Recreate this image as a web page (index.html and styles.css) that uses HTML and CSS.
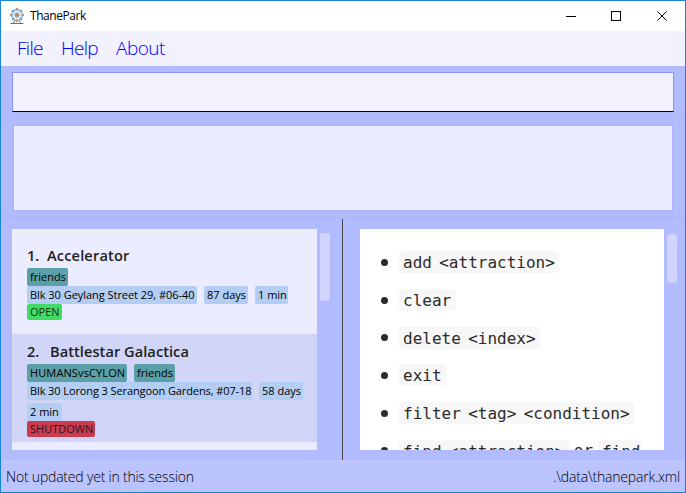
FILE: index.html
```html
<!DOCTYPE html>
<html lang="en">
<head>
<meta charset="utf-8">
<title>ThanePark</title>
<link rel="stylesheet" href="styles.css">
</head>
<body>
<div class="window">
  <header class="titlebar">
    <svg class="app-icon" width="16" height="16" viewBox="0 0 16 16">
      <path d="M7.5 7.5 4.5 15M8.500 7.500 11.500 15" stroke="#68737a" fill="none"/>
      <path d="M1.500 15.500h13" stroke="#756b67"/>
      <circle cx="8" cy="7" r="5.500" fill="#e8f3fa" stroke="#72b4dc" stroke-width="1.300"/>
      <path d="M8 1.500v11M2.500 7h11M4 3l8 8M12 3l-8 8" stroke="#86b4cf" stroke-width=".8"/>
      <circle cx="8" cy="7" r="2" fill="#b8865c"/>
      <g fill="#e08b4c"><rect x="7" y="0" width="2" height="2"/><rect x="1" y="6" width="2" height="2"/><rect x="13" y="6" width="2" height="2"/><rect x="7" y="12" width="2" height="2"/></g>
      <g fill="#5b9fd0"><rect x="3" y="2" width="2" height="2"/><rect x="11" y="2" width="2" height="2"/><rect x="3" y="10" width="2" height="2"/><rect x="11" y="10" width="2" height="2"/></g>
    </svg>
    <span class="title">ThanePark</span>
    <svg class="controls" width="104" height="12" viewBox="0 0 104 12" fill="none" stroke="#000" shape-rendering="crispEdges">
      <path d="M0 6.500h10M45.500 1.500h9v9h-9z"/>
      <path d="M91.500 1.500l9 9M100.500 1.500l-9 9" shape-rendering="auto"/>
    </svg>
  </header>
  <nav class="menu"><span class="file">File</span><span class="help">Help</span><span class="about">About</span></nav>
  <section class="command"><div class="command-box"></div></section>
  <section class="result"><div class="result-box"></div></section>
  <main class="split">
    <section class="rides">
      <div class="ride-list">
        <article class="ride">
          <h2><span class="num">1.</span><span class="name-one">Accelerator</span></h2>
          <div class="row"><span class="tag w41">friends</span></div>
          <div class="row"><span class="cell w170">Blk 30 Geylang Street 29, #06-40</span><span class="cell w44">87 days</span><span class="cell w33">1 min</span></div>
          <div class="row"><span class="status open w35">OPEN</span></div>
        </article>
        <article class="ride alt">
          <h2><span class="num two">2.</span><span class="name-two">Battlestar Galactica</span></h2>
          <div class="row"><span class="tag w100">HUMANSvsCYLON</span><span class="tag w41">friends</span></div>
          <div class="row wrap"><span class="cell w225">Blk 30 Lorong 3 Serangoon Gardens, #07-18</span><span class="cell w44">58 days</span><span class="cell w35">2 min</span></div>
          <div class="row"><span class="status shut w68">SHUTDOWN</span></div>
        </article>
      </div>
      <div class="thumb ride-thumb"></div>
    </section>
    <div class="divider"></div>
    <section class="browser">
      <div class="help-page">
        <ul>
          <li><code>add &lt;attraction&gt;</code></li>
          <li><code>clear</code></li>
          <li><code>delete &lt;index&gt;</code></li>
          <li><code>exit</code></li>
          <li><code>filter &lt;tag&gt; &lt;condition&gt;</code></li>
          <li><code>find &lt;attraction&gt;</code><span class="or">or</span><code class="cut">find</code></li>
        </ul>
      </div>
      <div class="thumb page-thumb"></div>
    </section>
  </main>
  <footer class="status-bar"><span class="sync">Not updated yet in this session</span><span class="path">.\data\thanepark.xml</span></footer>
</div>
</body>
</html>
```
FILE: styles.css
```css
* { box-sizing: border-box; }
body { margin: 0; font-family: "Open Sans", "Noto Sans", sans-serif; }
.window { width: 686px; height: 493px; display: flex; flex-direction: column; border: 1px solid #1883d7; background: #b3bbff; overflow: hidden; white-space: nowrap; }
.titlebar { height: 30px; flex: none; display: flex; align-items: center; padding: 0 15px 0 8px; background: #fff; }
.title { margin: -1px 0 0 5px; font-size: 12px; letter-spacing: -.45px; color: #000; }
.controls { margin-left: auto; margin-top: -1px; }
.menu { height: 35px; flex: none; display: flex; align-items: center; padding: 0 0 1px 16px; background: #f2f2ff; color: #0000f5; font-size: 19px; font-weight: 300; }
.file { width: 44px; letter-spacing: -.7px; }
.help { width: 55px; letter-spacing: -.7px; }
.about { letter-spacing: -.5px; }
.command { height: 53px; flex: none; padding: 6px 11px 6px; border-bottom: 2px solid #aeb6fc; }
.command-box { height: 40px; border: 1px solid #8793ff; border-bottom-color: #000; background: #f2f2ff; }
.result { height: 99px; flex: none; padding: 5px 11px 6px; border-bottom: 1px solid #aab2f8; }
.result-box { height: 88px; border: 2px solid #adb5fb; background: #ebecff; }
.split { height: 242px; flex: none; display: flex; }
.rides { width: 341px; flex: none; display: flex; padding: 11px 0 10px 11px; }
.ride-list { width: 305px; height: 221px; overflow: hidden; background: #ebecff; }
.ride { height: 105px; padding: 16px 0 0 15px; color: #1d1d1d; }
.ride.alt { height: 108px; padding-top: 7px; background: #d1d5f7; }
h2 { display: flex; height: 23px; margin: 0; font-size: 14.600px; line-height: 20px; font-weight: 600; }
.num { width: 20px; }
.name-one { letter-spacing: .15px; }
.name-two { letter-spacing: .05px; }
.two { width: 23px; }
.row { display: flex; gap: 0 7px; font-size: 11px; }
.wrap { flex-wrap: wrap; row-gap: 3px; width: 282px; }
.row span { flex: none; height: 18px; padding-left: 3px; line-height: 18px; border-radius: 2px; background: #b3cdf3; color: #000; }
.row .tag { background: #5b9fa9; }
.row .status { height: 16px; line-height: 16px; }
.row .open { background: #3fdb65; color: #1a3320; }
.row .shut { background: #cb3c51; color: #2b1720; }
.w33 { width: 33px; } .w35 { width: 35px; } .w41 { width: 41px; } .w44 { width: 44px; }
.w68 { width: 68px; } .w100 { width: 100px; letter-spacing: .12px; } .w170 { width: 170px; letter-spacing: -.04px; }
.row .w225 { width: 225px; letter-spacing: -.1px; }
.thumb { width: 10px; margin-left: 3px; border-radius: 3px; background: #d0d4ff; }
.ride-thumb { height: 68px; margin-top: 4px; }
.page-thumb { height: 49px; margin-top: 5px; }
.divider { width: 1px; margin-top: 1px; background: #484848; }
.browser { flex: 1; display: flex; padding: 11px 0 10px 17px; }
.help-page { width: 304px; height: 221px; overflow: hidden; background: #fff; color: #2b2b2b; }
ul { margin: 0; padding: 14.500px 0 0 21px; list-style: none; }
li { height: 37.700px; display: flex; align-items: center; font-size: 16px; }
li::before { content: ""; width: 7px; height: 7px; margin-right: 11px; border-radius: 50%; background: #2b2b2b; }
code { height: 22px; padding: 0 4.500px 0 4px; border-radius: 3px; background: #f7f7f7; font: 16px/23px "DejaVu Sans Mono", monospace; word-spacing: -2.300px; }
.or { width: 29px; text-align: center; font: 16px/23px "DejaVu Sans Mono", monospace; }
.cut { padding-right: 0; border-radius: 3px 0 0 3px; }
.status-bar { flex: 1; display: flex; justify-content: space-between; padding: 0 5px; background: #bcc4ff; font-size: 14px; line-height: 33px; letter-spacing: -.2px; font-weight: 300; color: #000; }
```
